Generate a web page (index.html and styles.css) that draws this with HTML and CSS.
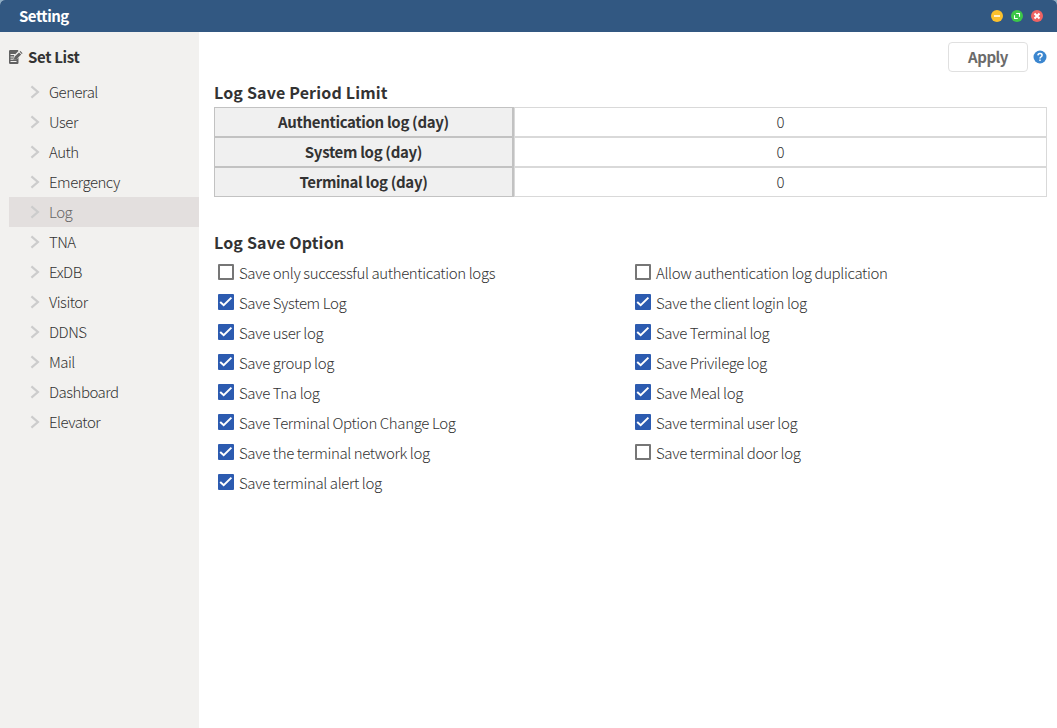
FILE: index.html
```
<!DOCTYPE html>
<html lang="en">
<head>
<meta charset="utf-8">
<title>Setting</title>
<link rel="stylesheet" href="styles.css">
</head>
<body>
<svg class="defs" aria-hidden="true">
  <symbol id="chevron" viewBox="0 0 10 14"><path d="M1.4 1.4 7.9 7 1.4 12.6" fill="none" stroke="currentColor" stroke-width="2.2"/></symbol>
  <symbol id="tick" viewBox="0 0 16 16"><path d="M2.2 7.9 5.7 11.2 13.4 3.6" fill="none" stroke="#fff" stroke-width="2"/></symbol>
</svg>
<div class="window">
  <header class="titlebar">
    <h1 class="title">Setting</h1>
    <div class="controls">
      <svg class="control" viewBox="0 0 12 12"><circle cx="6" cy="6" r="6" fill="#fbc02d"/><path d="M3 6h6" stroke="#fff" stroke-width="1.5"/></svg>
      <svg class="control" viewBox="0 0 12 12"><circle cx="6" cy="6" r="6" fill="#3cc748"/><path d="M5.2 3.5h3.3v3.3M6.8 8.5H3.5V5.2" fill="none" stroke="#fff" stroke-width="1.1"/></svg>
      <svg class="control" viewBox="0 0 12 12"><circle cx="6" cy="6" r="6" fill="#ee6363"/><path d="M3.5 3.5l5 5M8.5 3.5l-5 5" stroke="#fff" stroke-width="2"/></svg>
    </div>
  </header>
  <div class="body">
    <nav class="sidebar">
      <h2 class="list-title">
        <svg class="list-icon" viewBox="0 0 14 14"><path d="M1.2 0H8.8L9.5 1 5 5.5 4.3 9.8 8 9 9.5 7.5V12.8Q9.5 14 8.3 14H1.2Q0 14 0 12.8V1.2Q0 0 1.2 0Z" fill="#626262"/><path d="M1.5 4.5h4.5M1.5 7h3M1.5 9.2h2.5M1.5 11.5h6" stroke="#f2f1ef"/><path d="M4.8 9.7 5.5 6.7 10 2.4 12.2 4.5 7.7 8.9ZM10.6 1.8 11.4 1.1 13.6 3.2 12.8 4Z" fill="#626262"/></svg>
        <span>Set List</span>
      </h2>
      <ul class="menu">
        <li class="item"><svg class="chevron"><use href="#chevron"/></svg><span>General</span></li>
        <li class="item"><svg class="chevron"><use href="#chevron"/></svg><span>User</span></li>
        <li class="item"><svg class="chevron"><use href="#chevron"/></svg><span>Auth</span></li>
        <li class="item"><svg class="chevron"><use href="#chevron"/></svg><span>Emergency</span></li>
        <li class="item active"><svg class="chevron"><use href="#chevron"/></svg><span>Log</span></li>
        <li class="item"><svg class="chevron"><use href="#chevron"/></svg><span>TNA</span></li>
        <li class="item"><svg class="chevron"><use href="#chevron"/></svg><span>ExDB</span></li>
        <li class="item"><svg class="chevron"><use href="#chevron"/></svg><span>Visitor</span></li>
        <li class="item"><svg class="chevron"><use href="#chevron"/></svg><span>DDNS</span></li>
        <li class="item"><svg class="chevron"><use href="#chevron"/></svg><span>Mail</span></li>
        <li class="item"><svg class="chevron"><use href="#chevron"/></svg><span>Dashboard</span></li>
        <li class="item"><svg class="chevron"><use href="#chevron"/></svg><span>Elevator</span></li>
      </ul>
    </nav>
    <main class="content">
      <div class="toolbar">
        <button class="apply">Apply</button>
        <svg class="help" viewBox="0 0 14 14"><circle cx="7" cy="7" r="6.5" fill="#3b86cf"/><path d="M4.9 5.4Q5 3.6 7 3.6T9.1 5.3Q9.1 6.3 8 6.9 7 7.4 7 8.5M7 9.5v1.6" fill="none" stroke="#fff" stroke-width="1.5"/></svg>
      </div>
      <section>
        <h2 class="heading">Log Save Period Limit</h2>
        <div class="limits">
          <div class="limit-name">Authentication log (day)</div><div class="limit-value">0</div>
          <div class="limit-name">System log (day)</div><div class="limit-value">0</div>
          <div class="limit-name">Terminal log (day)</div><div class="limit-value">0</div>
        </div>
      </section>
      <section class="options-section">
        <h2 class="heading">Log Save Option</h2>
        <div class="options">
          <div class="option"><span class="box"></span><span class="label">Save only successful authentication logs</span></div>
          <div class="option"><span class="box"></span><span class="label">Allow authentication log duplication</span></div>
          <div class="option"><svg class="box checked"><use href="#tick"/></svg><span class="label">Save System Log</span></div>
          <div class="option"><svg class="box checked"><use href="#tick"/></svg><span class="label">Save the client login log</span></div>
          <div class="option"><svg class="box checked"><use href="#tick"/></svg><span class="label">Save user log</span></div>
          <div class="option"><svg class="box checked"><use href="#tick"/></svg><span class="label">Save Terminal log</span></div>
          <div class="option"><svg class="box checked"><use href="#tick"/></svg><span class="label">Save group log</span></div>
          <div class="option"><svg class="box checked"><use href="#tick"/></svg><span class="label">Save Privilege log</span></div>
          <div class="option"><svg class="box checked"><use href="#tick"/></svg><span class="label">Save Tna log</span></div>
          <div class="option"><svg class="box checked"><use href="#tick"/></svg><span class="label">Save Meal log</span></div>
          <div class="option"><svg class="box checked"><use href="#tick"/></svg><span class="label">Save Terminal Option Change Log</span></div>
          <div class="option"><svg class="box checked"><use href="#tick"/></svg><span class="label">Save terminal user log</span></div>
          <div class="option"><svg class="box checked"><use href="#tick"/></svg><span class="label">Save the terminal network log</span></div>
          <div class="option"><span class="box"></span><span class="label">Save terminal door log</span></div>
          <div class="option"><svg class="box checked"><use href="#tick"/></svg><span class="label">Save terminal alert log</span></div>
        </div>
      </section>
    </main>
  </div>
</div>
</body>
</html>
```
FILE: styles.css
```
* { box-sizing: border-box; }
body {
  margin: 0;
  background: #8fb0c5;
  font-family: "Noto Sans CJK KR", "Noto Sans", sans-serif;
  font-size: 15px;
  font-weight: 300;
  color: #333;
}
h1, h2, ul { margin: 0; padding: 0; }
.defs { position: absolute; width: 0; height: 0; }
.window {
  display: flex;
  flex-direction: column;
  height: 728px;
  border-radius: 5px 5px 0 0;
  overflow: hidden;
  background: #fff;
}
.titlebar {
  display: flex;
  align-items: center;
  justify-content: space-between;
  height: 32px;
  padding: 0 14px 0 19px;
  background: #325882;
}
.title { font-size: 15px; font-weight: 700; line-height: 32px; letter-spacing: -0.5px; color: #fff; }
.controls { display: flex; gap: 8px; }
.control { width: 12px; height: 12px; }
.body { display: flex; flex: 1; }
.sidebar { width: 199px; padding: 10px 0 0 9px; background: #f2f1ef; }
.list-title {
  display: flex;
  align-items: center;
  gap: 5px;
  height: 30px;
  font-size: 15px;
  font-weight: 700;
  line-height: 30px;
  letter-spacing: -0.35px;
}
.list-icon { width: 14px; height: 14px; }
.menu { padding-top: 5px; list-style: none; letter-spacing: -0.5px; }
.item {
  display: flex;
  align-items: center;
  gap: 9px;
  height: 30px;
  padding-left: 21px;
  line-height: 30px;
}
.chevron { width: 10px; height: 14px; color: #ccc; }
.active { background: #e3dfde; color: #666; }
.content { flex: 1; padding: 10px 10px 0 15px; }
.toolbar { display: flex; align-items: center; justify-content: flex-end; gap: 5px; height: 30px; }
.apply {
  width: 80px;
  height: 30px;
  padding: 0;
  border: 1px solid #e0e0e0;
  border-radius: 4px;
  background: #fff;
  font: 700 15px/28px "Noto Sans CJK KR", sans-serif;
  letter-spacing: -0.5px;
  color: #6b6b6b;
}
.help { width: 14px; height: 14px; }
.heading { height: 35px; padding-top: 5px; font-size: 16px; font-weight: 700; line-height: 30px; letter-spacing: 0.17px; }
.limits { display: grid; grid-template-columns: 300px 1fr; grid-auto-rows: 30px; text-align: center; line-height: 28px; }
.limit-name { border: 1px solid #c2c2c2; border-right-width: 2px; background: #f0f0f0; font-weight: 700; letter-spacing: -0.33px; }
.limit-value { border: 1px solid #d9d9d9; }
.options-section { padding-top: 25px; }
.options { display: grid; grid-template-columns: 417px 1fr; grid-auto-rows: 30px; padding-top: 1px; }
.option { display: flex; gap: 5px; padding-left: 4px; }
.box { width: 16px; height: 16px; margin-top: 6px; border: 2px solid #767676; border-radius: 1px; }
.checked { border: 0; background: #2c5bb0; }
.label { line-height: 30px; letter-spacing: -0.37px; }
```
